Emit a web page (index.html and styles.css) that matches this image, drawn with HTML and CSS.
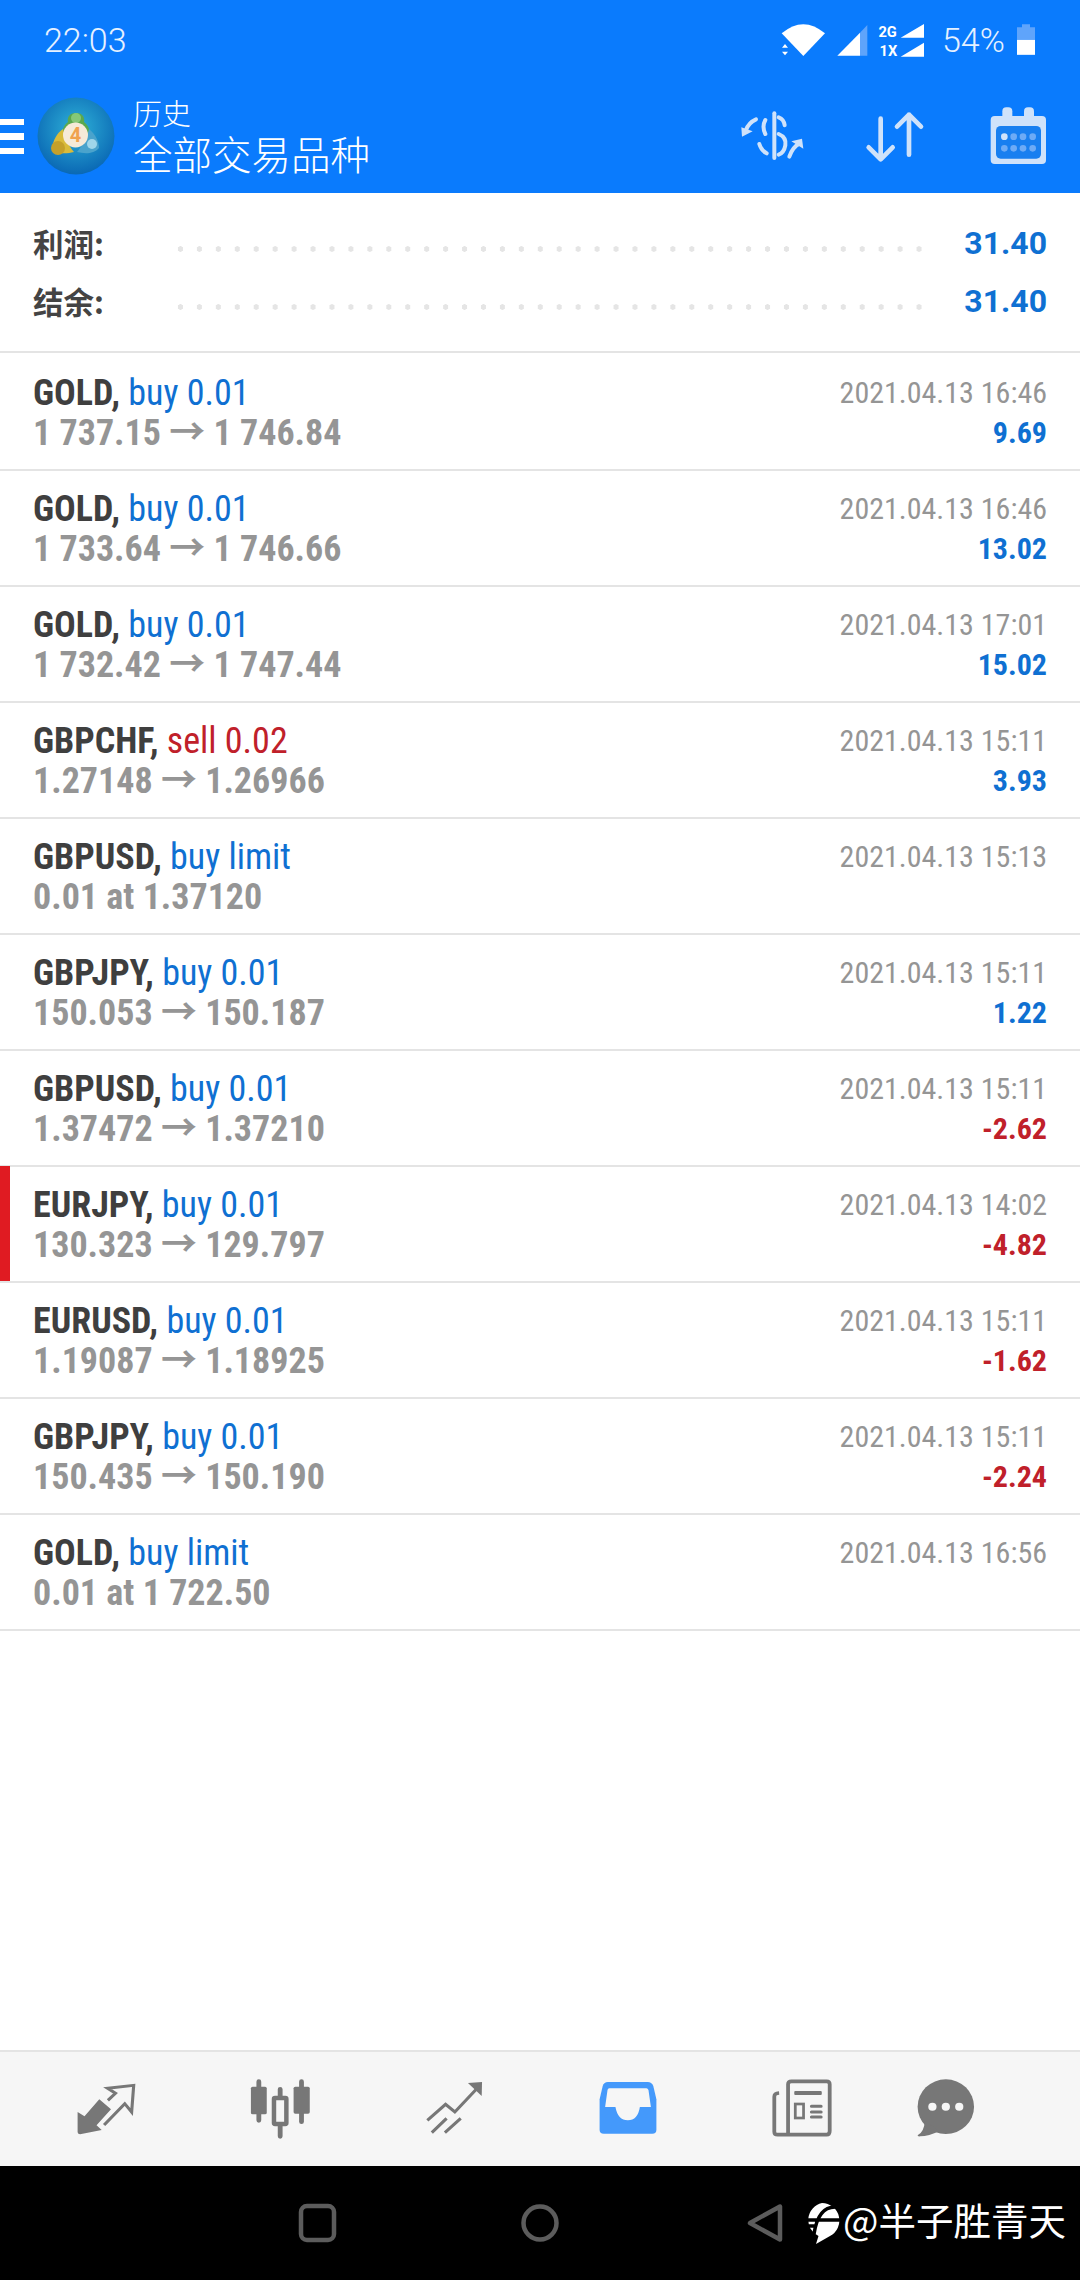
FILE: index.html
```html
<!DOCTYPE html>
<html lang="zh">
<head>
<meta charset="utf-8">
<title>历史</title>
<link rel="stylesheet" href="styles.css">
</head>
<body>
<div class="page">
  <header class="top">
    <div class="status">
      <span class="clock">22:03</span>
      <svg class="status-icons" viewBox="360 60 435 120" aria-hidden="true">
        <path class="w" d="M365 100Q430 45 495 100L430 168Z"/>
        <path class="w" d="M375 132l-9 11h18zM375 166l-9-11h18z"/>
        <path class="w" d="M532 167L600 98V167Z"/>
        <path class="lt" d="M600 98L622 75V167H600Z"/>
        <text class="net" x="683" y="111">2G</text>
        <text class="net" x="685" y="169">1X</text>
        <path class="w" d="M722 113L792 72V113ZM722 170L792 128V170Z"/>
      </svg>
      <span class="pct">54%</span>
      <svg class="battery" viewBox="1073 75 54 92" aria-hidden="true">
        <path class="lt" d="M1088 75H1112V84H1127V122H1073V84H1088Z"/>
        <rect class="w" x="1073" y="122" width="54" height="45"/>
      </svg>
    </div>
    <div class="bar">
      <div class="burger"><i></i><i></i><i></i></div>
      <svg class="logo" viewBox="0 0 80 80" aria-hidden="true">
        <defs>
          <radialGradient id="lg" cx="50%" cy="40%" r="60%">
            <stop offset="0" stop-color="#2fb2d8"/>
            <stop offset="1" stop-color="#0a68b4"/>
          </radialGradient>
        </defs>
        <circle cx="40" cy="40" r="38.5" fill="url(#lg)"/>
        <path d="M40 17C33 17 31 22 32 26C28 29 26 34 26 39L40 46L54 39C54 34 52 29 48 26C49 22 47 17 40 17Z" fill="#5aa84e"/>
        <circle cx="40" cy="22" r="5" fill="#86c878"/>
        <path d="M27 33C21 37 17 44 16 53C20 58 30 58 38 56C33 50 29 42 27 33Z" fill="#d9bb3a"/>
        <circle cx="22" cy="52" r="7" fill="#c4a02a"/>
        <path d="M53 33C59 38 63 45 63 52C58 58 49 58 41 56C46 50 51 42 53 33Z" fill="#4aa3cc"/>
        <circle cx="56" cy="48" r="5" fill="#9fd6ea"/>
        <circle cx="39.5" cy="39" r="12.5" fill="#f6ead8"/>
        <text class="four" x="39.5" y="46">4</text>
      </svg>
      <div class="titles">
        <div class="t1">历史</div>
        <div class="t2">全部交易品种</div>
      </div>
      <div class="tools">
        <svg class="tool" viewBox="228 300 216 216" aria-hidden="true">
          <g class="ts">
            <path d="M343 340V474"/>
            <path d="M356 352Q372 358 374 376"/>
            <path d="M316 360Q305 380 316 402"/>
            <path d="M356 402Q380 412 376 436Q372 458 356 464"/>
            <path d="M298 432Q304 452 320 460"/>
            <path d="M288 358Q266 368 258 390"/>
            <path d="M388 470Q398 440 420 430"/>
          </g>
          <path class="tf" d="M244 382L278 394L246 410ZM430 446L394 424L426 416Z"/>
        </svg>
        <svg class="tool" viewBox="597 300 216 216" aria-hidden="true">
          <g class="ts wide">
            <path d="M662 356V476M626 442L662 478L698 442"/>
            <path d="M747 344V464M711 380L747 344L783 380"/>
          </g>
        </svg>
        <svg class="tool" viewBox="966 300 216 216" aria-hidden="true">
          <path class="tf" d="M1004 348H1146Q1158 348 1158 360V480Q1158 492 1146 492H1004Q992 492 992 480V360Q992 348 1004 348Z"/>
          <rect class="tf" x="1027" y="322" width="30" height="36" rx="12"/>
          <rect class="tf" x="1092" y="322" width="30" height="36" rx="12"/>
          <rect class="hole" x="1008" y="378" width="135" height="98" rx="14"/>
          <circle class="tf" cx="1033" cy="410" r="10"/>
          <g class="dots">
            <circle cx="1061" cy="410" r="10"/><circle cx="1089" cy="410" r="10"/><circle cx="1118" cy="410" r="10"/>
            <circle cx="1033" cy="445" r="10"/><circle cx="1061" cy="445" r="10"/><circle cx="1089" cy="445" r="10"/><circle cx="1118" cy="445" r="10"/>
          </g>
        </svg>
      </div>
    </div>
  </header>

  <section class="summary">
    <div class="sum-row"><span class="sum-label">利润:</span><span class="leader"></span><span class="sum-val">31.40</span></div>
    <div class="sum-row"><span class="sum-label">结余:</span><span class="leader"></span><span class="sum-val">31.40</span></div>
  </section>

  <main class="list">
    <div class="row"><div class="c"><div class="l1"><b>GOLD,</b> <span class="buy">buy 0.01</span></div><div class="l2">1 737.15 → 1 746.84</div></div><div class="r"><div class="time">2021.04.13 16:46</div><div class="pl pos">9.69</div></div></div>
    <div class="row"><div class="c"><div class="l1"><b>GOLD,</b> <span class="buy">buy 0.01</span></div><div class="l2">1 733.64 → 1 746.66</div></div><div class="r"><div class="time">2021.04.13 16:46</div><div class="pl pos">13.02</div></div></div>
    <div class="row"><div class="c"><div class="l1"><b>GOLD,</b> <span class="buy">buy 0.01</span></div><div class="l2">1 732.42 → 1 747.44</div></div><div class="r"><div class="time">2021.04.13 17:01</div><div class="pl pos">15.02</div></div></div>
    <div class="row"><div class="c"><div class="l1"><b>GBPCHF,</b> <span class="sell">sell 0.02</span></div><div class="l2">1.27148 → 1.26966</div></div><div class="r"><div class="time">2021.04.13 15:11</div><div class="pl pos">3.93</div></div></div>
    <div class="row"><div class="c"><div class="l1"><b>GBPUSD,</b> <span class="buy">buy limit</span></div><div class="l2">0.01 at 1.37120</div></div><div class="r"><div class="time">2021.04.13 15:13</div></div></div>
    <div class="row"><div class="c"><div class="l1"><b>GBPJPY,</b> <span class="buy">buy 0.01</span></div><div class="l2">150.053 → 150.187</div></div><div class="r"><div class="time">2021.04.13 15:11</div><div class="pl pos">1.22</div></div></div>
    <div class="row"><div class="c"><div class="l1"><b>GBPUSD,</b> <span class="buy">buy 0.01</span></div><div class="l2">1.37472 → 1.37210</div></div><div class="r"><div class="time">2021.04.13 15:11</div><div class="pl neg">-2.62</div></div></div>
    <div class="row marked"><div class="c"><div class="l1"><b>EURJPY,</b> <span class="buy">buy 0.01</span></div><div class="l2">130.323 → 129.797</div></div><div class="r"><div class="time">2021.04.13 14:02</div><div class="pl neg">-4.82</div></div></div>
    <div class="row"><div class="c"><div class="l1"><b>EURUSD,</b> <span class="buy">buy 0.01</span></div><div class="l2">1.19087 → 1.18925</div></div><div class="r"><div class="time">2021.04.13 15:11</div><div class="pl neg">-1.62</div></div></div>
    <div class="row"><div class="c"><div class="l1"><b>GBPJPY,</b> <span class="buy">buy 0.01</span></div><div class="l2">150.435 → 150.190</div></div><div class="r"><div class="time">2021.04.13 15:11</div><div class="pl neg">-2.24</div></div></div>
    <div class="row"><div class="c"><div class="l1"><b>GOLD,</b> <span class="buy">buy limit</span></div><div class="l2">0.01 at 1 722.50</div></div><div class="r"><div class="time">2021.04.13 16:56</div></div></div>
  </main>

  <nav class="tabs">
    <svg class="tab" viewBox="214.5 144 186 180" preserveAspectRatio="none" aria-hidden="true">
      <path class="nf" d="M225 243L245 256L288 205L322 235L280 283L295 297L232 310Q226 310 225 304Z"/>
      <path class="ns" d="M313 208L335 187L312 172L388 163L382 243L362 218L302 282"/>
    </svg>
    <svg class="tab" viewBox="718.5 144 186 180" preserveAspectRatio="none" aria-hidden="true">
      <path class="ns thick" d="M750 152V268M874 152V272M812 175V316"/>
      <rect class="nf" x="727" y="167" width="46" height="83" rx="5"/>
      <rect class="nf" x="851" y="167" width="47" height="81" rx="5"/>
      <rect class="cut" x="794" y="201" width="36" height="78" rx="3"/>
    </svg>
    <svg class="tab" viewBox="1224.5 144 186 180" preserveAspectRatio="none" aria-hidden="true">
      <path class="ns" d="M1240 268L1293 220L1320 243L1385 172M1253 305L1296 262M1291 305L1337 262"/>
      <path class="nf" d="M1358 156L1399 153L1398 195Z"/>
    </svg>
    <svg class="tab" viewBox="162.5 144 186 180" preserveAspectRatio="none" aria-hidden="true">
      <path class="active" d="M197 153H313Q324 153 329 165L338 205V297Q338 308 326 308H185Q173 308 173 297V205L182 165Q186 153 197 153Z"/>
      <path class="tray" d="M201 172H309Q313 172 315 177L322 228H290Q284 268 255 268Q226 268 219 228H189L196 177Q197 172 201 172Z"/>
    </svg>
    <svg class="tab" viewBox="669.5 144 186 180" preserveAspectRatio="none" aria-hidden="true">
      <path class="ns wider" d="M722 306V160Q722 151 732 151H834Q843 151 843 160V300Q843 311 834 311H692Q682 311 682 302V197Q682 187 696 186"/>
      <rect class="nf" x="740" y="180" width="80" height="12" rx="3"/>
      <rect class="ns narrow" x="743" y="219" width="24" height="42"/>
      <path class="ns lines" d="M790 226H818M790 243H818M790 258H818"/>
    </svg>
    <svg class="tab tab-chat" viewBox="1086.5 144 186 180" preserveAspectRatio="none" aria-hidden="true">
      <circle class="nf" cx="1179" cy="227" r="82"/>
      <path class="nf" d="M1118 270Q1116 303 1097 313Q1097 317 1104 316Q1130 316 1160 300Z"/>
      <circle class="cutf" cx="1140" cy="227" r="12"/><circle class="cutf" cx="1179" cy="227" r="12"/><circle class="cutf" cx="1218" cy="227" r="12"/>
    </svg>
  </nav>

  <footer class="sysbar">
    <svg class="k k-square" viewBox="0 0 40 40" aria-hidden="true"><rect x="4" y="3" width="33" height="34" rx="6"/></svg>
    <svg class="k k-circle" viewBox="0 0 40 40" aria-hidden="true"><circle cx="20" cy="20" r="16.5"/></svg>
    <svg class="k k-back" viewBox="0 0 38 40" aria-hidden="true"><path d="M34 3.5V36.5L4 20Z"/></svg>
    <svg class="wm-logo" viewBox="0 0 38 44" aria-hidden="true">
      <path class="wm-w" d="M19 2A17.5 17.5 0 0 1 27 35L13 43L15.500 35A17.500 17.500 0 0 1 19 2Z"/>
      <path class="wm-b" d="M1 19H37M32 6Q15 6 11 33M4 25H12"/>
    </svg>
    <span class="wm-text">@半子胜青天</span>
  </footer>
</div>
</body>
</html>
```
FILE: styles.css
```css
* { box-sizing: border-box; }
html, body { margin: 0; padding: 0; background: #fff; }
.page { width: 1080px; height: 2280px; display: flex; flex-direction: column; overflow: hidden; font-family: "Roboto Condensed", Roboto, "Noto Sans CJK SC", sans-serif; }

.top { background: #0a7bfd; height: 193px; color: #fff; flex: none; }
.status { height: 79px; display: flex; align-items: center; padding: 0 45px 0 44px; }
.clock { font: 300 34px Roboto, sans-serif; flex: 1; color: #e6f1ff; }
.status-icons { width: 145px; height: 40px; }
.w { fill: #fff; }
.lt { fill: #5fa4fb; }
.net { fill: #fff; font: 700 44px Roboto, sans-serif; text-anchor: middle; }
.pct { font: 300 34px Roboto, sans-serif; margin-left: 17px; color: #e6f1ff; width: 64px; white-space: nowrap; }
.battery { width: 18px; height: 31px; margin-left: 11px; }

.bar { height: 114px; display: flex; align-items: center; }
.burger { width: 24px; display: flex; flex-direction: column; gap: 8px; margin-top: 1px; flex: none; }
.burger i { display: block; height: 6.500px; background: #fff; }
.logo { width: 80px; height: 80px; margin-left: 12px; flex: none; }
.four { font: 700 20px Roboto, sans-serif; fill: #f0a24e; text-anchor: middle; }
.titles { margin-left: 17px; font-family: "Noto Sans CJK SC", sans-serif; color: #fff; }
.t1 { font-size: 29px; line-height: 34px; font-weight: 300; }
.t2 { font-size: 39.500px; line-height: 48px; font-weight: 300; }
.tools { margin-left: auto; margin-right: 26px; display: flex; gap: 51px; }
.tool { width: 72px; height: 72px; display: block; }
.ts { fill: none; stroke: #cfe2fa; stroke-width: 12; stroke-linecap: round; stroke-linejoin: round; }
.ts.wide { stroke-width: 14; }
.tf { fill: #cfe2fa; }
.hole { fill: #187ff0; }
.dots { fill: #6dabf6; }

.summary { flex: none; height: 160px; padding: 21px 33px 0; border-bottom: 2px solid #e4e4e4; }
.sum-row { display: flex; align-items: center; height: 58px; }
.sum-label { width: 138px; font: 700 30.500px "Noto Sans CJK SC", sans-serif; color: #444; }
.leader { flex: 1; height: 6px; margin-top: 11px; background-image: radial-gradient(circle, #e5e5e5 2.500px, transparent 3px); background-size: 18.950px 6px; background-repeat: repeat-x; }
.sum-val { width: 117px; text-align: right; font: 700 32px Roboto, sans-serif; color: #0f70d2; }

.list { flex: 1; padding-top: 2px; }
.row { position: relative; height: 116px; padding: 18px 33px 0; border-bottom: 2px solid #e4e4e4; display: flex; justify-content: space-between; }
.row.marked::before { content: ""; position: absolute; left: 0; top: -1px; bottom: 0; width: 10px; background: #e01b22; }
.l1, .l2, .time, .pl { line-height: 40px; white-space: nowrap; font-stretch: 75%; }
.l1 { font-size: 36px; }
.l1 b { font-weight: 700; color: #3f3f3f; }
.buy { color: #0f70d2; }
.sell { color: #c0202a; }
.l2 { font-size: 36px; font-weight: 700; color: #959595; }
.r { text-align: right; }
.time { font-size: 30px; color: #959595; }
.pl { font-size: 30px; font-weight: 700; }
.pos { color: #0f70d2; }
.neg { color: #c0202a; }

.tabs { flex: none; height: 116px; background: #f6f6f6; border-top: 2px solid #e4e4e4; display: flex; align-items: center; gap: 110px; padding-left: 74px; }
.tab { width: 64px; height: 60px; flex: none; }
.tab-chat { margin-left: -30px; }
.nf { fill: #777; }
.ns { fill: none; stroke: #777; stroke-width: 9; stroke-linejoin: miter; }
.ns.thick { stroke-width: 14; stroke-linecap: round; }
.ns.wider { stroke-width: 11; }
.ns.narrow { stroke-width: 8; }
.ns.lines { stroke-width: 9; stroke-linecap: round; }
.cut { fill: #f6f6f6; stroke: #777; stroke-width: 13; }
.cutf { fill: #f6f6f6; }
.active { fill: #4499fb; }
.tray { fill: #f6f6f6; }

.sysbar { flex: none; height: 114px; background: #000; display: flex; align-items: center; padding-left: 297px; }
.k { width: 40px; height: 40px; flex: none; fill: none; stroke: #5c5c5c; stroke-width: 4.500; stroke-linejoin: round; }
.k-circle { margin-left: 183px; }
.k-back { width: 38px; margin-left: 186px; }
.wm-logo { width: 38px; height: 44px; margin-left: 19px; flex: none; }
.wm-w { fill: #fff; }
.wm-b { fill: none; stroke: #000; stroke-width: 3.500; }
.wm-text { margin-left: 2px; margin-bottom: 10px; font: 400 37.500px "Noto Sans CJK SC", sans-serif; color: #fff; white-space: nowrap; }
```
